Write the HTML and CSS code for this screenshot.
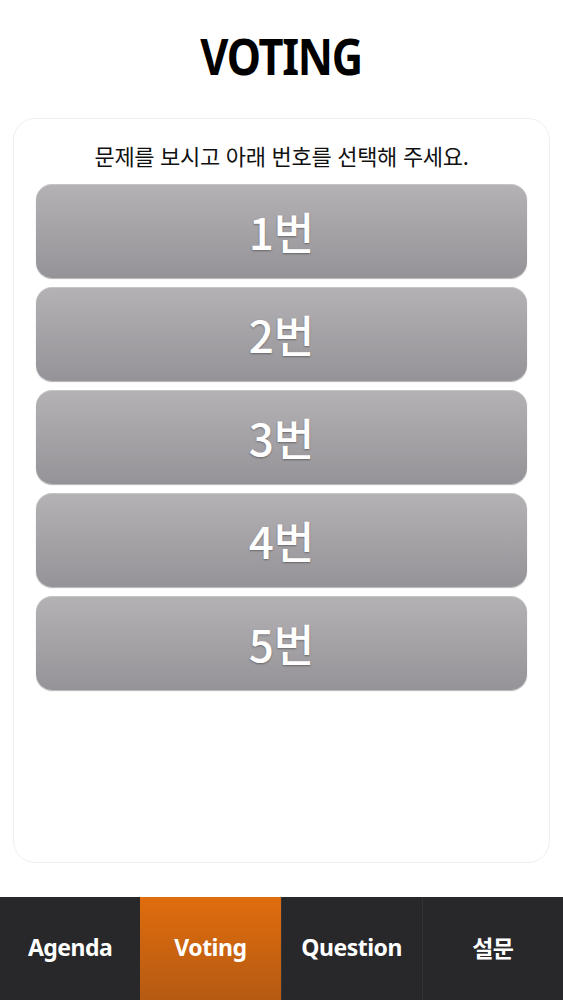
FILE: index.html
```html
<!DOCTYPE html>
<html lang="ko">

<head>
    <meta charset="UTF-8">
    <meta name="viewport" content="width=device-width, initial-scale=1.0">
    <title>Voting</title>
    <link rel="stylesheet" href="styles.css">
</head>

<body>
    <div class="page">
        <h1 class="title"><span>VOTING</span></h1>

        <!-- 투표 카드 -->
        <div class="card">
            <p class="guide">문제를 보시고 아래 번호를 선택해 주세요.</p>
            <div class="choices">
                <button class="choice">1번</button>
                <button class="choice">2번</button>
                <button class="choice">3번</button>
                <button class="choice">4번</button>
                <button class="choice">5번</button>
            </div>
        </div>
    </div>

    <!-- 하단 메뉴 -->
    <nav class="tabbar">
        <a class="tab">Agenda</a>
        <a class="tab active">Voting</a>
        <a class="tab">Question</a>
        <a class="tab">설문</a>
    </nav>
</body>

</html>
```

FILE: styles.css
```css
body {
    margin: 0;
    height: 1000px;
    display: flex;
    flex-direction: column;
    background: #fff;
    font-family: "Noto Sans", "Noto Sans CJK KR", sans-serif;
}

.page {
    flex: 1;
    display: flex;
    flex-direction: column;
}

.title {
    margin: 0;
    height: 118px;
    line-height: 110px;
    text-align: center;
    font-size: 51px;
    font-weight: 700;
    letter-spacing: -1.5px;
    color: #000;
}

.title span {
    display: inline-block;
    transform: scaleX(0.85);
}

.card {
    margin: 0 13px;
    height: 745px;
    box-sizing: border-box;
    border: 1px solid #efefef;
    border-radius: 22px;
    padding: 0 22px;
}

.guide {
    margin: 0;
    height: 65px;
    line-height: 72px;
    text-align: center;
    font-family: "Noto Sans CJK KR", sans-serif;
    font-size: 22px;
    letter-spacing: -0.3px;
    color: #111;
}

.choices {
    display: flex;
    flex-direction: column;
    gap: 9px;
}

.choice {
    height: 94px;
    border: none;
    border-radius: 16px;
    background: linear-gradient(to bottom, #b4b2b5, #959397);
    box-shadow: inset 0 1px 0 rgba(255, 255, 255, 0.25), 0 1px 1px rgba(0, 0, 0, 0.3);
    color: #fff;
    font-family: "Noto Sans CJK KR", sans-serif;
    font-size: 44px;
    font-weight: 500;
    text-shadow: 0 1px 2px rgba(0, 0, 0, 0.35);
    cursor: pointer;
}

.tabbar {
    height: 103px;
    display: flex;
    background: #28282a;
}

.tab {
    flex: 1;
    display: flex;
    justify-content: center;
    align-items: center;
    padding-bottom: 4px;
    color: #fff;
    font-family: "Noto Sans", "Noto Sans CJK KR", sans-serif;
    font-size: 23px;
    font-weight: 700;
    letter-spacing: -0.5px;
    border-left: 1px solid #333336;
}

.tab:first-child {
    border-left: none;
}

.tab.active {
    background: linear-gradient(to bottom, #e06d0e, #b55a12);
    border-left: none;
}
```
